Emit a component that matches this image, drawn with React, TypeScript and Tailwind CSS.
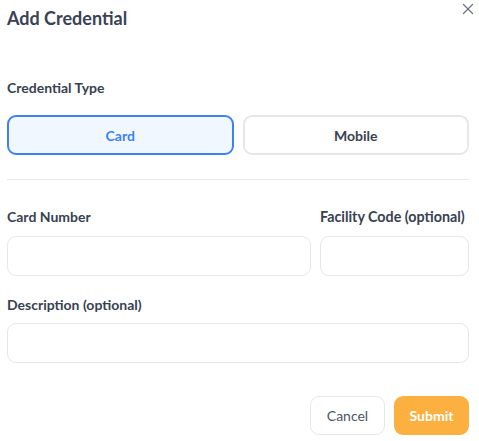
import { X } from 'lucide-react';

export default function App() {
  return (
    <div className="relative w-[479px] h-[441px] bg-white pl-[7px] pr-[10px] font-['Lato',sans-serif] text-[#374151]">
      {/* Header */}
      <div className="h-[36px] flex items-center">
        <h2 className="text-[18px] font-bold leading-[36px] text-[#3a4255]">Add Credential</h2>
      </div>
      <button className="absolute top-0 right-[2px] text-[#6b7280]">
        <X className="w-[18px] h-[18px]" strokeWidth={1.75} />
      </button>

      {/* Credential type */}
      <div className="mt-[42px] text-[14px] font-bold leading-[20px]">Credential Type</div>
      <div className="mt-[17px] grid grid-cols-2 gap-[9px]">
        <button className="h-[40px] rounded-[9px] border-2 border-[#3b82f6] bg-[#f1f7ff] text-[14px] font-bold text-[#3b82f6]">
          Card
        </button>
        <button className="h-[40px] rounded-[9px] border-2 border-[#e5e7eb] bg-white text-[14px] font-bold text-[#374151]">
          Mobile
        </button>
      </div>

      <div className="mt-[24px] h-px bg-[#e5e7eb]" />

      {/* Card fields */}
      <div className="mt-[27px] grid grid-cols-[1fr_149px] gap-x-[9px]">
        <div>
          <div className="text-[14px] font-bold leading-[20px] whitespace-nowrap">Card Number</div>
          <input className="mt-[9px] block w-full h-[40px] rounded-[9px] border border-[#e5e7eb] px-3 outline-none" />
        </div>
        <div>
          <div className="text-[14.3px] font-bold leading-[20px] whitespace-nowrap">Facility Code (optional)</div>
          <input className="mt-[9px] block w-full h-[40px] rounded-[9px] border border-[#e5e7eb] px-3 outline-none" />
        </div>
      </div>

      <div className="mt-[19px] text-[14px] font-bold leading-[20px]">Description (optional)</div>
      <input className="mt-[8px] block w-full h-[40px] rounded-[9px] border border-[#e5e7eb] px-3 outline-none" />

      {/* Actions */}
      <div className="mt-[33px] flex justify-end gap-[9px]">
        <button className="w-[75px] h-[39px] rounded-[9px] border border-[#e5e7eb] bg-white text-[14px] text-[#4b5563]">
          Cancel
        </button>
        <button className="w-[75px] h-[39px] rounded-[9px] bg-[#fbb040] text-[14px] font-bold text-white">
          Submit
        </button>
      </div>
    </div>
  );
}
